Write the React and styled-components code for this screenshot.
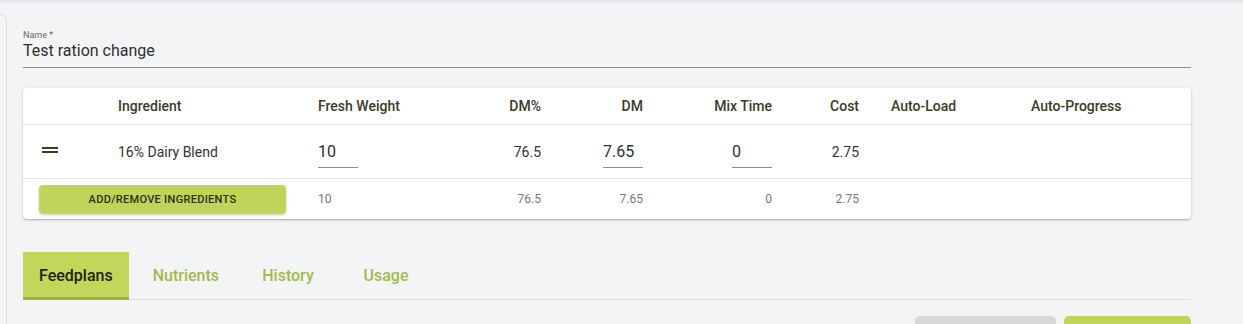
import React from "react";
import styled, { createGlobalStyle } from "styled-components";

const GlobalStyle = createGlobalStyle`
  html, body {
    margin: 0;
    padding: 0;
    background: #f3f4f6;
    font-family: Roboto, "Liberation Sans", Arial, sans-serif;
    overflow: hidden;
  }
`;

// handle, ingredient, fresh weight, dm%, dm, mix time, cost, auto-load, auto-progress
const COLS = "79px 200px 128px 127px 102px 129px 87px 140px 176px";

const Page = styled.div`
  position: relative;
  height: 324px;
  display: flex;
  background: #f3f4f6;

  &::before {
    content: "";
    position: absolute;
    top: 0;
    left: 0;
    right: 0;
    height: 5px;
    background: linear-gradient(#e4e5e8, rgba(243, 244, 246, 0));
  }
`;

const SideEdge = styled.div`
  width: 6px;
  margin-top: 14px;
  border-right: 1px solid #dcdde0;
  border-top: 1px solid #dcdde0;
  border-top-right-radius: 6px;
  flex-shrink: 0;
`;

const Content = styled.div`
  width: 1168px;
  padding: 29px 0 0 16px;
  display: flex;
  flex-direction: column;
`;

const Field = styled.div`
  border-bottom: 1px solid #8c8c8c;
  padding-bottom: 6px;
`;

const FieldLabel = styled.div`
  font-size: 9px;
  color: #666;
  line-height: 12px;
`;

const FieldValue = styled.div`
  font-size: 16px;
  color: #2f2f2f;
  line-height: 20px;
`;

const Card = styled.div`
  margin-top: 20px;
  background: #fff;
  border-radius: 4px;
  box-shadow: 0 1px 3px rgba(0, 0, 0, 0.22), 0 1px 1px rgba(0, 0, 0, 0.1);
`;

const Row = styled.div`
  display: grid;
  grid-template-columns: ${COLS};
  height: ${(p) => p.$h}px;
  align-items: center;
  border-bottom: ${(p) => (p.$last ? "none" : "1px solid #e3e3e3")};
`;

const Cell = styled.div`
  padding: 0 16px;
  font-size: ${(p) => (p.$small ? 12 : 14)}px;
  font-weight: ${(p) => (p.$head ? 500 : 400)};
  color: ${(p) => (p.$head ? "#3b3b26" : p.$small ? "#777777" : "#333")};
  display: flex;
  align-items: center;
  justify-content: ${(p) => (p.$right ? "flex-end" : "flex-start")};
  grid-column: ${(p) => p.$span || "auto"};
  white-space: nowrap;
`;

const Handle = styled.div`
  margin-left: 3px;
  width: 16px;
  height: 6px;
  box-sizing: border-box;
  border-top: 2px solid #3b3b26;
  border-bottom: 2px solid #3b3b26;
  margin-top: -3px;
`;

const NumInput = styled.div`
  width: 40px;
  font-size: 16px;
  line-height: 19px;
  color: #2f2f2f;
  padding: 0 0 6px;
  margin-top: 7px;
  border-bottom: 1px solid #8c8c8c;
`;

const AddButton = styled.button`
  width: 100%;
  height: 28px;
  border: none;
  border-radius: 4px;
  background: #c0d459;
  color: #2e2e1c;
  font-family: inherit;
  font-size: 11px;
  font-weight: 500;
  letter-spacing: 0.3px;
  box-shadow: 0 2px 2px rgba(0, 0, 0, 0.18), 0 1px 4px rgba(0, 0, 0, 0.08);
  cursor: pointer;
`;

const Tabs = styled.div`
  margin-top: 33px;
  display: flex;
  gap: 8px;
  border-bottom: 1px solid #dcdde0;
`;

const Tab = styled.div`
  min-width: 90px;
  height: 48px;
  box-sizing: border-box;
  padding: 0 16px 1px;
  display: flex;
  align-items: center;
  justify-content: center;
  font-size: 16px;
  font-weight: 500;
  color: ${(p) => (p.$active ? "#22220f" : "#a3ba4b")};
  background: ${(p) => (p.$active ? "#c2d65a" : "transparent")};
  border-top: 3px solid transparent;
  border-bottom: 3px solid ${(p) => (p.$active ? "#9db23d" : "transparent")};
  margin-bottom: -1px;
`;

const Actions = styled.div`
  margin-top: 16px;
  display: flex;
  justify-content: flex-end;
  gap: 8px;
`;

const ActionButton = styled.div`
  width: ${(p) => p.$w}px;
  height: 30px;
  border-radius: 5px;
  background: ${(p) => (p.$primary ? "#c0d459" : "#d6d7d9")};
`;

const headers = [
  { t: "", r: false },
  { t: "Ingredient", r: false },
  { t: "Fresh Weight", r: false },
  { t: "DM%", r: true },
  { t: "DM", r: true },
  { t: "Mix Time", r: true },
  { t: "Cost", r: true },
  { t: "Auto-Load", r: false },
  { t: "Auto-Progress", r: false },
];

const totals = [
  { t: "10", r: false },
  { t: "76.5", r: true },
  { t: "7.65", r: true },
  { t: "0", r: true },
  { t: "2.75", r: true },
  { t: "", r: false },
  { t: "", r: false },
];

export default function App() {
  return (
    <Page>
      <GlobalStyle />
      <SideEdge />
      <Content>
        <Field>
          <FieldLabel>Name *</FieldLabel>
          <FieldValue>Test ration change</FieldValue>
        </Field>

        <Card>
          <Row $h={36}>
            {headers.map((h, i) => (
              <Cell key={i} $head $right={h.r}>
                {h.t}
              </Cell>
            ))}
          </Row>
          <Row $h={53}>
            <Cell>
              <Handle />
            </Cell>
            <Cell>16% Dairy Blend</Cell>
            <Cell>
              <NumInput>10</NumInput>
            </Cell>
            <Cell $right>76.5</Cell>
            <Cell $right>
              <NumInput>7.65</NumInput>
            </Cell>
            <Cell $right>
              <NumInput>0</NumInput>
            </Cell>
            <Cell $right>2.75</Cell>
            <Cell />
            <Cell />
          </Row>
          <Row $h={40} $last>
            <Cell $span="1 / span 2">
              <AddButton>ADD/REMOVE INGREDIENTS</AddButton>
            </Cell>
            {totals.map((c, i) => (
              <Cell key={i} $small $right={c.r}>
                {c.t}
              </Cell>
            ))}
          </Row>
        </Card>

        <Tabs>
          <Tab $active>Feedplans</Tab>
          <Tab>Nutrients</Tab>
          <Tab>History</Tab>
          <Tab>Usage</Tab>
        </Tabs>

        <Actions>
          <ActionButton $w={141} />
          <ActionButton $w={127} $primary />
        </Actions>
      </Content>
    </Page>
  );
}
